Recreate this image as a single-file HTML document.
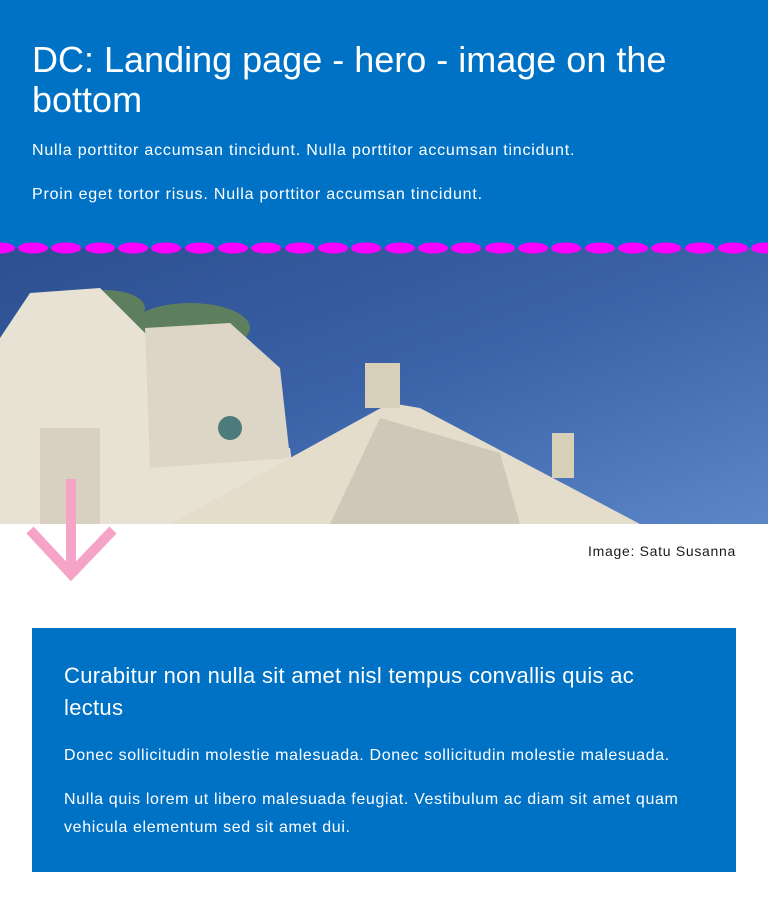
<!DOCTYPE html>
<html><head><meta charset="utf-8"><style>
body{margin:0;width:768px;height:920px;background:#fff;font-family:"Liberation Sans",sans-serif;position:relative;overflow:hidden}
.hero{position:absolute;left:0;top:0;width:768px;height:250px;background:#0072c6;color:#fff}
h1{position:absolute;left:32px;top:40px;margin:0;font-size:36px;font-weight:normal;line-height:40px;letter-spacing:0px;width:700px}
.p1{position:absolute;left:32px;top:142px;font-size:16px;margin:0;letter-spacing:0.8px}
.p2{position:absolute;left:32px;top:186px;font-size:16px;margin:0;letter-spacing:0.8px}
.cap{position:absolute;right:32px;top:543px;font-size:14px;color:#1a1a1a;letter-spacing:0.7px}
.box{position:absolute;left:32px;top:628px;width:704px;height:244px;background:#0072c6;color:#fff}
.box h2{position:absolute;left:32px;top:32px;margin:0;font-size:22px;font-weight:normal;line-height:32px;width:600px;letter-spacing:0.3px}
.box p{position:absolute;left:32px;margin:0;font-size:16px;line-height:28px;width:640px;letter-spacing:0.65px}
</style></head><body>
<div class="hero">
<h1>DC: Landing page - hero - image on the bottom</h1>
<p class="p1">Nulla porttitor accumsan tincidunt. Nulla porttitor accumsan tincidunt.</p>
<p class="p2">Proin eget tortor risus. Nulla porttitor accumsan tincidunt.</p>
</div>
<svg style="position:absolute;left:0;top:248px" width="768" height="276" viewBox="0 0 768 276">
<defs><linearGradient id="sky" x1="0" y1="0" x2="1" y2="1"><stop offset="0" stop-color="#2c4f90"/><stop offset="0.5" stop-color="#3b63a8"/><stop offset="1" stop-color="#5b86c8"/></linearGradient></defs>
<rect width="768" height="276" fill="url(#sky)"/>
<ellipse cx="190" cy="80" rx="60" ry="25" fill="#5e7f5e"/>
<ellipse cx="105" cy="60" rx="40" ry="18" fill="#5e7f5e"/>
<polygon points="0,90 30,45 100,40 170,110 150,200 290,200 300,276 0,276" fill="#e8e2d4"/>
<polygon points="145,80 230,75 280,120 290,210 150,220" fill="#ddd6c6"/>
<polygon points="170,276 390,155 420,160 640,276" fill="#e4ddcc"/>
<polygon points="380,170 500,205 520,276 330,276" fill="#cfc8b8"/>
<rect x="365" y="115" width="35" height="45" fill="#d8cfb8"/>
<rect x="552" y="185" width="22" height="45" fill="#d8cfb8"/>
<circle cx="230" cy="180" r="12" fill="#4d7a7a"/>
<rect x="40" y="180" width="60" height="96" fill="#d8d1c1"/>
</svg>
<svg style="position:absolute;left:0;top:241px" width="768" height="16">
<rect width="768" height="7" fill="#0072c6"/>
<g fill="#ff00ff">
<ellipse cx="0" cy="7" rx="15" ry="5.5"/><ellipse cx="33" cy="7" rx="15" ry="5.5"/><ellipse cx="66" cy="7" rx="15" ry="5.5"/><ellipse cx="100" cy="7" rx="15" ry="5.5"/><ellipse cx="133" cy="7" rx="15" ry="5.5"/><ellipse cx="166" cy="7" rx="15" ry="5.5"/><ellipse cx="200" cy="7" rx="15" ry="5.5"/><ellipse cx="233" cy="7" rx="15" ry="5.5"/><ellipse cx="266" cy="7" rx="15" ry="5.5"/><ellipse cx="300" cy="7" rx="15" ry="5.5"/><ellipse cx="333" cy="7" rx="15" ry="5.5"/><ellipse cx="366" cy="7" rx="15" ry="5.5"/><ellipse cx="400" cy="7" rx="15" ry="5.5"/><ellipse cx="433" cy="7" rx="15" ry="5.5"/><ellipse cx="466" cy="7" rx="15" ry="5.5"/><ellipse cx="500" cy="7" rx="15" ry="5.5"/><ellipse cx="533" cy="7" rx="15" ry="5.5"/><ellipse cx="566" cy="7" rx="15" ry="5.5"/><ellipse cx="600" cy="7" rx="15" ry="5.5"/><ellipse cx="633" cy="7" rx="15" ry="5.5"/><ellipse cx="666" cy="7" rx="15" ry="5.5"/><ellipse cx="700" cy="7" rx="15" ry="5.5"/><ellipse cx="733" cy="7" rx="15" ry="5.5"/><ellipse cx="766" cy="7" rx="15" ry="5.5"/>
</g></svg>
<svg style="position:absolute;left:20px;top:478px" width="110" height="110">
<path d="M51 1V96M10 52L51 96L93 52" fill="none" stroke="#f5a3c7" stroke-width="10"/>
</svg>
<div class="cap">Image: Satu Susanna</div>
<div class="box">
<h2>Curabitur non nulla sit amet nisl tempus convallis quis ac lectus</h2>
<p style="top:114px">Donec sollicitudin molestie malesuada. Donec sollicitudin molestie malesuada.</p>
<p style="top:158px">Nulla quis lorem ut libero malesuada feugiat. Vestibulum ac diam sit amet quam vehicula elementum sed sit amet dui.</p>
</div>
</body></html>
